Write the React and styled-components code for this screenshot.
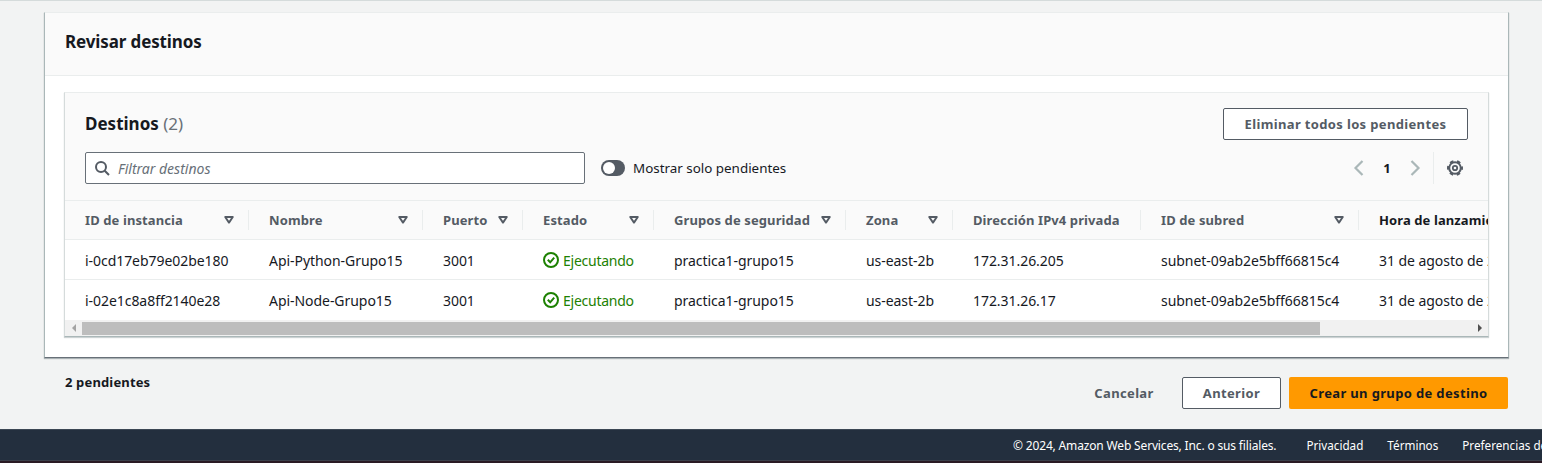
import React from 'react';
import styled, { createGlobalStyle } from 'styled-components';

const columns = [
  { title: 'ID de instancia', width: 184 },
  { title: 'Nombre', width: 174 },
  { title: 'Puerto', width: 100 },
  { title: 'Estado', width: 131 },
  { title: 'Grupos de seguridad', width: 192 },
  { title: 'Zona', width: 107 },
  { title: 'Dirección IPv4 privada', width: 188, noFilter: true },
  { title: 'ID de subred', width: 218 },
  { title: 'Hora de lanzamiento', width: 260, noFilter: true, active: true },
];

const targets = [
  ['i-0cd17eb79e02be180', 'Api-Python-Grupo15', '3001', 'Ejecutando', 'practica1-grupo15', 'us-east-2b', '172.31.26.205', 'subnet-09ab2e5bff66815c4', '31 de agosto de 2024'],
  ['i-02e1c8a8ff2140e28', 'Api-Node-Grupo15', '3001', 'Ejecutando', 'practica1-grupo15', 'us-east-2b', '172.31.26.17', 'subnet-09ab2e5bff66815c4', '31 de agosto de 2024'],
];

const gridColumns = columns.map((c) => `${c.width}px`).join(' ');

const FilterIcon = () => (
  <svg width="12" height="12" viewBox="0 0 12 12" fill="none">
    <path d="M2.2 3h7.6L6 8.6z" stroke="#545b64" strokeWidth="1.9" strokeLinejoin="round" />
  </svg>
);

const SearchIcon = () => (
  <svg width="16" height="16" viewBox="0 0 16 16" fill="none">
    <circle cx="7" cy="7" r="5" stroke="#545b64" strokeWidth="2" />
    <path d="M10.7 10.7L15 15" stroke="#545b64" strokeWidth="2" />
  </svg>
);

const SuccessIcon = () => (
  <svg width="16" height="16" viewBox="0 0 16 16" fill="none">
    <circle cx="8" cy="8" r="7" stroke="#1d8102" strokeWidth="2" />
    <path d="M4.8 7.8l2.4 2.5 4-4.6" stroke="#1d8102" strokeWidth="2" />
  </svg>
);

const GearIcon = () => (
  <svg width="16" height="16" viewBox="0 0 16 16" fill="none">
    <circle cx="8" cy="8" r="5.8" stroke="#545b64" strokeWidth="2" />
    <circle cx="8" cy="8" r="7" stroke="#545b64" strokeWidth="2" strokeDasharray="3.6 3.73" strokeDashoffset="1.8" />
    <circle cx="8" cy="8" r="2.2" stroke="#545b64" strokeWidth="1.8" />
  </svg>
);

const ChevronIcon = ({ flip }) => (
  <svg width="16" height="16" viewBox="0 0 16 16" fill="none">
    <path d={flip ? 'M4.5 1l7 7-7 7' : 'M11.5 1l-7 7 7 7'} stroke="#aab7b8" strokeWidth="2.2" />
  </svg>
);

const App = () => {
  return (
    <>
      <GlobalStyle />
      <Page>
        <Main>
          <Container>
            <ContainerHeader>Revisar destinos</ContainerHeader>
            <ContainerBody>
              <TableCard>
                <CardHeader>
                  <TitleRow>
                    <CardTitle>
                      Destinos <Count>(2)</Count>
                    </CardTitle>
                    <OutlineButton $wide>Eliminar todos los pendientes</OutlineButton>
                  </TitleRow>
                  <ToolsRow>
                    <SearchBox>
                      <SearchIcon />
                      <SearchInput placeholder="Filtrar destinos" />
                    </SearchBox>
                    <ToggleWrap>
                      <Toggle />
                      <span>Mostrar solo pendientes</span>
                    </ToggleWrap>
                    <Pagination>
                      <ChevronIcon />
                      <PageNumber>1</PageNumber>
                      <ChevronIcon flip />
                      <Divider />
                      <GearIcon />
                    </Pagination>
                  </ToolsRow>
                </CardHeader>
                <TableClip>
                  <HeadRow>
                    {columns.map((col, i) => (
                      <HeadCell key={col.title} $active={col.active} $last={i === columns.length - 1}>
                        <span>{col.title}</span>
                        {!col.noFilter && <FilterIcon />}
                      </HeadCell>
                    ))}
                  </HeadRow>
                  {targets.map((row) => (
                    <BodyRow key={row[0]}>
                      {row.map((value, i) => (
                        <BodyCell key={i}>
                          {value === 'Ejecutando' ? (
                            <Status>
                              <SuccessIcon />
                              {value}
                            </Status>
                          ) : (
                            value
                          )}
                        </BodyCell>
                      ))}
                    </BodyRow>
                  ))}
                </TableClip>
                <ScrollBar>
                  <ScrollArrow $left />
                  <ScrollThumb />
                  <ScrollArrow />
                </ScrollBar>
              </TableCard>
            </ContainerBody>
          </Container>
          <ActionsRow>
            <PendingNote>2 pendientes</PendingNote>
            <Actions>
              <LinkButton>Cancelar</LinkButton>
              <OutlineButton>Anterior</OutlineButton>
              <PrimaryButton>Crear un grupo de destino</PrimaryButton>
            </Actions>
          </ActionsRow>
        </Main>
        <Footer>
          <Copyright>© 2024, Amazon Web Services, Inc. o sus filiales.</Copyright>
          <FooterLink>Privacidad</FooterLink>
          <FooterLink>Términos</FooterLink>
          <FooterLink>Preferencias de cookies</FooterLink>
        </Footer>
        <BottomEdge />
      </Page>
    </>
  );
};

const GlobalStyle = createGlobalStyle`
  html, body {
    margin: 0;
    height: 100%;
    overflow: hidden;
    background: #f2f3f3;
  }
  * {
    box-sizing: border-box;
  }
  body {
    font-family: 'Noto Sans', Arial, sans-serif;
    font-size: 13px;
    color: #16191f;
  }
`;

const Page = styled.div`
  height: 463px;
  display: flex;
  flex-direction: column;
  border-top: 1px solid #d5dbdb;
  overflow: hidden;
`;

const Main = styled.main`
  flex: 1;
  padding: 11px 33px 0 44px;
`;

const Container = styled.section`
  height: 346px;
  background: #fff;
  border: 1px solid #eaeded;
  border-left-color: #aab7b8;
  border-right-color: #aab7b8;
  border-bottom: 1px solid #687078;
  box-shadow: 0 1px 1px rgba(0, 28, 36, 0.3);
`;

const ContainerHeader = styled.h2`
  margin: 0;
  height: 63px;
  padding: 0 20px 5px;
  display: flex;
  align-items: center;
  background: #fafafa;
  border-bottom: 1px solid #eaeded;
  font-size: 17px;
  font-weight: 700;
  letter-spacing: -0.12px;
`;

const ContainerBody = styled.div`
  padding: 16px 19px 0;
`;

const TableCard = styled.div`
  height: 245px;
  background: #fff;
  border: 1px solid #eaeded;
  border-bottom-color: #aab7b8;
  border-left-color: #d5dbdb;
  border-right-color: #d5dbdb;
  box-shadow: 0 1px 1px rgba(0, 28, 36, 0.2);
  overflow: hidden;
`;

const CardHeader = styled.div`
  height: 108px;
  padding: 15px 20px 0;
  background: #fafafa;
  border-bottom: 1px solid #eaeded;
`;

const TitleRow = styled.div`
  display: flex;
  justify-content: space-between;
  align-items: center;
  height: 32px;
`;

const CardTitle = styled.h3`
  margin: 0 0 2px;
  font-size: 17px;
  font-weight: 700;
`;

const Count = styled.span`
  font-weight: 400;
  color: #687078;
`;

const ToolsRow = styled.div`
  display: flex;
  align-items: center;
  height: 32px;
  margin-top: 12px;
`;

const SearchBox = styled.label`
  width: 500px;
  height: 32px;
  display: flex;
  align-items: center;
  gap: 8px;
  padding: 0 8px;
  background: #fff;
  border: 1px solid #687078;
  border-radius: 2px;
`;

const SearchInput = styled.input`
  flex: 1;
  border: 0;
  outline: 0;
  padding: 0;
  font: italic 14px 'Noto Sans', Arial, sans-serif;
  &::placeholder {
    color: #687078;
    opacity: 1;
  }
`;

const ToggleWrap = styled.div`
  display: flex;
  align-items: center;
  gap: 8px;
  margin-left: 16px;
  font-size: 13.4px;
`;

const Toggle = styled.div`
  width: 24px;
  height: 16px;
  padding: 2px;
  border-radius: 8px;
  background: #545b64;
  &::before {
    content: '';
    display: block;
    width: 12px;
    height: 12px;
    border-radius: 50%;
    background: #fff;
  }
`;

const Pagination = styled.div`
  margin-left: auto;
  padding-right: 5px;
  display: flex;
  align-items: center;
`;

const PageNumber = styled.span`
  width: 40px;
  text-align: center;
  font-weight: 700;
`;

const Divider = styled.span`
  width: 1px;
  height: 32px;
  margin: 0 13px 0 10px;
  background: #eaeded;
`;

const TableClip = styled.div`
  overflow: hidden;
`;

const HeadRow = styled.div`
  display: grid;
  grid-template-columns: ${gridColumns};
  height: 39px;
  background: #fafafa;
  border-bottom: 1px solid #eaeded;
`;

const HeadCell = styled.div`
  display: flex;
  align-items: center;
  justify-content: space-between;
  padding: 0 14px 0 20px;
  white-space: nowrap;
  font-weight: 700;
  letter-spacing: 0.1px;
  color: ${(p) => (p.$active ? '#16191f' : '#545b64')};
  position: relative;
  &::after {
    content: '';
    display: ${(p) => (p.$last ? 'none' : 'block')};
    position: absolute;
    right: 0;
    top: 9px;
    height: 20px;
    width: 1px;
    background: #eaeded;
  }
`;

const BodyRow = styled.div`
  display: grid;
  grid-template-columns: ${gridColumns};
  height: 40px;
  padding-top: 1px;
  border-bottom: 1px solid #eaeded;
  &:last-child {
    border-bottom-color: transparent;
  }
`;

const BodyCell = styled.div`
  display: flex;
  align-items: center;
  padding-left: 20px;
  white-space: nowrap;
  font-size: 14px;
  letter-spacing: -0.05px;
`;

const Status = styled.span`
  display: flex;
  align-items: center;
  gap: 4px;
  color: #1d8102;
  letter-spacing: -0.25px;
`;

const ScrollBar = styled.div`
  height: 16px;
  display: flex;
  align-items: center;
  background: #f1f1f1;
`;

const ScrollArrow = styled.span`
  width: 17px;
  display: flex;
  justify-content: center;
  ${(p) => (p.$left ? '' : 'margin-left: auto;')}
  &::before {
    content: '';
    border-style: solid;
    border-width: 4px;
    border-color: transparent;
    ${(p) =>
      p.$left
        ? 'border-left-width: 0; border-right-color: #a3a3a3;'
        : 'border-right-width: 0; border-left-color: #505050;'}
  }
`;

const ScrollThumb = styled.div`
  width: 1238px;
  height: 13px;
  background: #bdbdbd;
`;

const ActionsRow = styled.div`
  display: flex;
  justify-content: space-between;
  align-items: flex-start;
  padding: 15px 1px 0 21px;
`;

const PendingNote = styled.div`
  line-height: 18px;
  font-weight: 700;
  letter-spacing: 0.15px;
  color: #16191f;
`;

const Actions = styled.div`
  display: flex;
  align-items: center;
  gap: 8px;
  margin-top: 4px;
`;

const BaseButton = styled.button`
  height: 32px;
  border-radius: 2px;
  font: 700 13px 'Noto Sans', Arial, sans-serif;
  letter-spacing: 0.35px;
  white-space: nowrap;
`;

const OutlineButton = styled(BaseButton)`
  width: ${(p) => (p.$wide ? '245px' : '99px')};
  background: #fff;
  border: 1px solid #545b64;
  color: #545b64;
`;

const LinkButton = styled(BaseButton)`
  width: 100px;
  background: transparent;
  border: 0;
  color: #545b64;
`;

const PrimaryButton = styled(BaseButton)`
  width: 219px;
  background: #ff9900;
  border: 0;
  color: #16191f;
`;

const Footer = styled.footer`
  height: 31px;
  flex: none;
  display: flex;
  align-items: center;
  gap: 24px;
  padding-left: 1013px;
  background: #232f3e;
  border-top: 1px solid #3b4653;
  color: #fff;
  font-size: 12px;
  white-space: nowrap;
`;

const Copyright = styled.span`
  margin-right: 6px;
  letter-spacing: -0.16px;
`;

const FooterLink = styled.a`
  color: #fff;
  font-size: 11.7px;
`;

const BottomEdge = styled.div`
  height: 3px;
  flex: none;
  border-top: 1px solid #3b3f4a;
  background: #2a1a24;
`;

export default App;
